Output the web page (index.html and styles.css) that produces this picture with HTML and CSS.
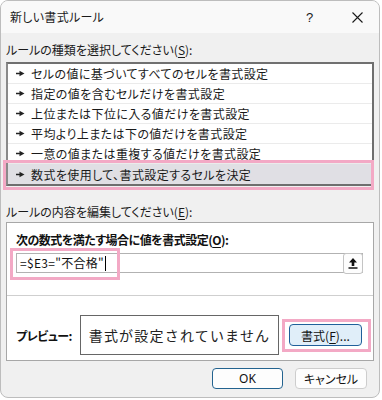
FILE: index.html
```html
<!DOCTYPE html>
<html lang="ja">
<head>
<meta charset="utf-8">
<link rel="stylesheet" href="styles.css">
</head>
<body>
<div class="dialog">
  <div class="titlebar">
    <span class="title">新しい書式ルール</span>
    <span class="help">?</span>
    <span class="close"><svg width="11" height="11" viewBox="0 0 11 11"><path d="M0.5 0.5L10.5 10.5M10.5 0.5L0.5 10.5" stroke="#1a1a1a" stroke-width="1.1" fill="none"/></svg></span>
  </div>
  <div class="body">
    <div class="label l1">ルールの種類を選択してください(<u>S</u>):</div>
    <div class="list">
      <div class="row"><svg class="arr" width="9" height="7" viewBox="0 0 9 7"><path d="M0 3.5H4" stroke="#222" stroke-width="1.4"/><path d="M3.5 0.8L8.5 3.5L3.5 6.2Z" fill="#222"/></svg>セルの値に基づいてすべてのセルを書式設定</div>
      <div class="row"><svg class="arr" width="9" height="7" viewBox="0 0 9 7"><path d="M0 3.5H4" stroke="#222" stroke-width="1.4"/><path d="M3.5 0.8L8.5 3.5L3.5 6.2Z" fill="#222"/></svg>指定の値を含むセルだけを書式設定</div>
      <div class="row"><svg class="arr" width="9" height="7" viewBox="0 0 9 7"><path d="M0 3.5H4" stroke="#222" stroke-width="1.4"/><path d="M3.5 0.8L8.5 3.5L3.5 6.2Z" fill="#222"/></svg>上位または下位に入る値だけを書式設定</div>
      <div class="row"><svg class="arr" width="9" height="7" viewBox="0 0 9 7"><path d="M0 3.5H4" stroke="#222" stroke-width="1.4"/><path d="M3.5 0.8L8.5 3.5L3.5 6.2Z" fill="#222"/></svg>平均より上または下の値だけを書式設定</div>
      <div class="row"><svg class="arr" width="9" height="7" viewBox="0 0 9 7"><path d="M0 3.5H4" stroke="#222" stroke-width="1.4"/><path d="M3.5 0.8L8.5 3.5L3.5 6.2Z" fill="#222"/></svg>一意の値または重複する値だけを書式設定</div>
      <div class="row sel"><svg class="arr" width="9" height="7" viewBox="0 0 9 7"><path d="M0 3.5H4" stroke="#222" stroke-width="1.4"/><path d="M3.5 0.8L8.5 3.5L3.5 6.2Z" fill="#222"/></svg>数式を使用して、書式設定するセルを決定</div>
      <div class="hl hl-row"></div>
    </div>
    <div class="label l2">ルールの内容を編集してください(<u>E</u>):</div>
    <div class="edit">
      <div class="edit-top">
        <div class="blabel">次の数式を満たす場合に値を書式設定(<u>O</u>):</div>
        <div class="input">
          <span class="formula">=$E3="不合格"</span><span class="caret"></span>
          <span class="ref"><svg width="10" height="12" viewBox="0 0 10 12"><path d="M5 1L9 5.5H6.3V9H3.7V5.5H1Z" fill="#111"/><path d="M0.5 11H9.5" stroke="#111" stroke-width="1.4"/></svg></span>
          <div class="hl hl-formula"></div>
        </div>
      </div>
      <div class="edit-bottom">
        <span class="plabel">プレビュー:</span>
        <div class="preview">書式が設定されていません</div>
        <div class="fmt-wrap">
          <span class="fmt">書式(<u>F</u>)...</span>
          <div class="hl hl-fmt"></div>
        </div>
      </div>
    </div>
    <div class="buttons">
      <span class="btn ok">OK</span>
      <span class="btn cancel">キャンセル</span>
    </div>
  </div>
</div>
</body>
</html>
```
FILE: styles.css
```css
html, body {
  margin: 0;
  padding: 0;
  background: #ffffff;
}
body {
  width: 382px;
  height: 400px;
  overflow: hidden;
  font-family: "Noto Sans CJK JP", "Noto Sans", sans-serif;
  font-size: 12px;
  color: #111;
  font-feature-settings: "palt";
}
.dialog {
  width: 380px;
  height: 398px;
  box-sizing: border-box;
  border: 1px solid #bdbdbd;
  border-radius: 8px;
  background: #f0f0f0;
  overflow: hidden;
}
.titlebar {
  height: 32px;
  background: #f9f9f9;
  display: flex;
  align-items: center;
  padding-left: 9px;
}
.title {
  flex: 1;
  font-size: 12px;
  line-height: 16px;
  color: #1a1a1a;
  letter-spacing: 0.3px;
}
.help {
  width: 10px;
  margin-right: 36px;
  font-family: "Liberation Sans", sans-serif;
  font-size: 13px;
  color: #1a1a1a;
}
.close {
  display: flex;
  margin-right: 16px;
}
.body {
  padding: 0 5px;
}
.label {
  line-height: 16px;
  color: #1a1a1a;
}
.l1 {
  padding-top: 9px;
  margin-bottom: 4px;
}
.l2 {
  padding-top: 18px;
  margin-bottom: 2px;
}
u {
  text-underline-offset: 2px;
}
.list {
  position: relative;
  background: #fff;
  border: 2px solid #6e6e6e;
  border-top-color: #707070;
  border-left-color: #8a8a8a;
}
.row {
  height: 19px;
  border-bottom: 1px solid #ebebeb;
  display: flex;
  align-items: center;
  padding-left: 8px;
  line-height: 19px;
  color: #1a1a1a;
  letter-spacing: 0.4px;
}
.row.sel {
  height: 20px;
  border-bottom: none;
  background: #e0dfe4;
}
.arr {
  margin-right: 6px;
  flex: none;
}
.hl {
  position: absolute;
  border: 3px solid #f3a9c5;
  pointer-events: none;
}
.hl-row {
  left: -5px;
  right: -2px;
  bottom: -6px;
  height: 24px;
}
.edit {
  background: #fff;
  border: 1px solid #a7a7a7;
}
.edit-top {
  padding: 9px 10px 22px 9px;
  border-bottom: 1px solid #cfcfcf;
}
.blabel {
  font-weight: bold;
  line-height: 16px;
  margin-bottom: 5px;
  color: #111;
  letter-spacing: -0.5px;
}
.input {
  position: relative;
  height: 20px;
  box-sizing: border-box;
  border: 1px solid #b2b2b2;
  display: flex;
  align-items: center;
  padding-left: 3px;
}
.formula {
  line-height: 16px;
  font-size: 12px;
  letter-spacing: 0.3px;
}
.caret {
  width: 1px;
  height: 15px;
  background: #000;
  margin-left: 1px;
}
.ref {
  margin-left: auto;
  width: 20px;
  height: 21px;
  box-sizing: border-box;
  margin-right: -1px;
  border: 1px solid #c4c4c4;
  border-radius: 3px;
  background: #fdfdfd;
  display: flex;
  align-items: center;
  justify-content: center;
}
.hl-formula {
  left: -7px;
  top: -6px;
  width: 104px;
  height: 26px;
}
.edit-bottom {
  height: 40px;
  padding: 19px 10px 5px 9px;
  display: flex;
  align-items: center;
}
.plabel {
  flex: none;
  font-weight: bold;
  width: 64px;
  color: #111;
  letter-spacing: -0.5px;
}
.preview {
  flex: none;
  width: 199px;
  height: 40px;
  box-sizing: border-box;
  border: 1px solid #666;
  display: flex;
  align-items: center;
  justify-content: center;
  font-size: 14px;
  letter-spacing: 1.2px;
  font-feature-settings: normal;
  color: #222;
}
.fmt-wrap {
  flex: none;
  position: relative;
  margin-left: 10px;
  display: flex;
}
.fmt {
  width: 73px;
  height: 22px;
  box-sizing: border-box;
  border: 1px solid #1f5f9a;
  border-radius: 4px;
  background: #e0eef9;
  display: flex;
  align-items: center;
  justify-content: center;
  color: #111;
}
.hl-fmt {
  left: -7px;
  top: -5px;
  width: 83px;
  height: 27px;
}
.buttons {
  display: flex;
  justify-content: flex-end;
  gap: 12px;
  margin-top: 7px;
  padding-right: 7px;
}
.btn {
  width: 71px;
  height: 21px;
  box-sizing: border-box;
  border-radius: 4px;
  background: #fdfdfd;
  display: flex;
  align-items: center;
  justify-content: center;
  color: #111;
}
.ok {
  border: 1px solid #23638f;
  font-family: "Noto Sans", sans-serif;
}
.cancel {
  width: 72px;
  border: 1px solid #cdcdcd;
}
```
